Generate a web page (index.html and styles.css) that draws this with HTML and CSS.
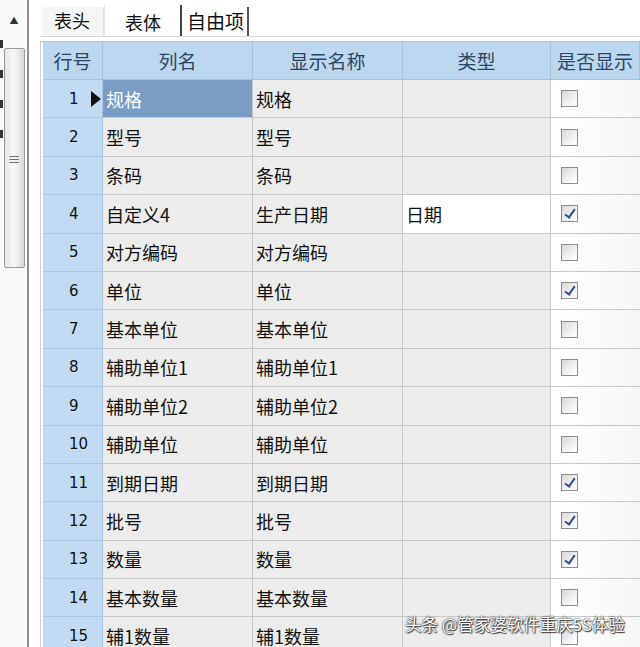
FILE: index.html
```html
<!DOCTYPE html>
<html lang="zh">
<head>
    <meta charset="UTF-8">
    <title>表体设置</title>
    <link rel="stylesheet" href="styles.css">
</head>
<body>
    <div class="side">
        <div class="side-marks"><span></span><span></span><span></span><span></span></div>
        <div class="scrollbar">
            <div class="arrow">&#9650;</div>
            <div class="thumb"><span class="grip">&#8801;</span></div>
        </div>
    </div>
    <div class="main">
        <div class="tabs">
            <div class="tab">表头</div>
            <div class="tab active">表体</div>
            <div class="tab last">自由项</div>
        </div>
        <div class="grid" id="grid">
            <div class="hd">行号</div>
            <div class="hd">列名</div>
            <div class="hd">显示名称</div>
            <div class="hd">类型</div>
            <div class="hd">是否显示</div>
        </div>
    </div>
    <div class="watermark">头条 @管家婆软件重庆5S体验</div>

    <script>
        const rows = [
            ["规格", "规格", "", false],
            ["型号", "型号", "", false],
            ["条码", "条码", "", false],
            ["自定义4", "生产日期", "日期", true],
            ["对方编码", "对方编码", "", false],
            ["单位", "单位", "", true],
            ["基本单位", "基本单位", "", false],
            ["辅助单位1", "辅助单位1", "", false],
            ["辅助单位2", "辅助单位2", "", false],
            ["辅助单位", "辅助单位", "", false],
            ["到期日期", "到期日期", "", true],
            ["批号", "批号", "", true],
            ["数量", "数量", "", true],
            ["基本数量", "基本数量", "", false],
            ["辅1数量", "辅1数量", "", false]
        ];
        const grid = document.getElementById("grid");
        rows.forEach(function (r, i) {
            let html = '<div class="num">' + (i + 1) + (i === 0 ? '<span class="cur"></span>' : '') + '</div>';
            html += '<div class="cell' + (i === 0 ? ' sel' : '') + '">' + r[0] + '</div>';
            html += '<div class="cell">' + r[1] + '</div>';
            html += '<div class="cell' + (r[2] ? ' white' : '') + '">' + r[2] + '</div>';
            html += '<div class="chk-cell"><span class="box' + (r[3] ? ' on' : '') + '"></span></div>';
            grid.insertAdjacentHTML("beforeend", html);
        });
    </script>
</body>
</html>
```

FILE: styles.css
```css
html, body {
    margin: 0;
    height: 100%;
    overflow: hidden;
}
body {
    display: flex;
    background: #fff;
    font-family: "Noto Sans CJK SC", "Liberation Sans", sans-serif;
    color: #111;
}
.side {
    width: 27px;
    flex: none;
    display: flex;
    border-right: 2px solid #8d8d8d;
    background: #fafafa;
}
.side-marks {
    width: 3px;
    padding-top: 40px;
    display: flex;
    flex-direction: column;
    gap: 22px;
}
.side-marks span {
    display: block;
    height: 8px;
    background: #333;
}
.scrollbar {
    width: 22px;
    display: flex;
    flex-direction: column;
    align-items: center;
    padding-top: 14px;
}
.arrow {
    font-size: 9px;
    color: #333;
    height: 34px;
}
.thumb {
    width: 19px;
    height: 218px;
    border: 1px solid #9a9a9a;
    border-radius: 2px;
    background: linear-gradient(to right, #e6e6e6, #f8f8f8 45%, #d8d8d8);
    display: flex;
    align-items: center;
    justify-content: center;
}
.grip {
    font-size: 13px;
    color: #555;
    line-height: 1;
}
.main {
    flex: 1;
    padding: 5px 0 0 11px;
    min-width: 0;
}
.tabs {
    display: flex;
    height: 31px;
    align-items: flex-end;
    padding-left: 2px;
    border-bottom: 1px solid #d8d8d8;
}
.tab {
    font-size: 18px;
    height: 29px;
    line-height: 27px;
    padding: 0 13px 0 12px;
    box-sizing: border-box;
    color: #111;
    background: #f6f6f6;
    border-right: 1px solid #e2e2e2;
}
.tab.active {
    background: #fff;
    height: 31px;
    line-height: 35px;
    padding: 0 19px 0 20px;
    border-left: 1px solid #e4e4e4;
    border-right: 2px solid #444;
}
.tab.last {
    padding: 0 3px 0 5px;
    font-size: 19px;
    border-right: 2px solid #555;
    background: #fff;
}
.grid {
    margin-top: 4px;
    border-left: 1px solid #c9d2dc;
    border-top: 1px solid #b9c3cf;
    padding-left: 2px;
    display: grid;
    grid-template-columns: 60px 150px 150px 148px 1fr;
    grid-template-rows: 38px;
    grid-auto-rows: 38.4px;
}
.grid > div {
    box-sizing: border-box;
    border-right: 1px solid #c8c8c8;
    border-bottom: 1px solid #c8c8c8;
    display: flex;
    align-items: center;
    font-size: 18px;
}
.hd {
    background: #bdd7ee;
    color: #2a4766;
    justify-content: center;
    font-size: 19px !important;
    border-color: #a9c2da !important;
}
.num {
    background: #c2dbf2;
    padding-left: 26px;
    font-family: "DejaVu Sans", sans-serif;
    font-size: 15px !important;
    position: relative;
    border-color: #a9c6e4 !important;
}
.cur {
    position: absolute;
    left: 48px;
    top: 11px;
    border-left: 10px solid #111;
    border-top: 8px solid transparent;
    border-bottom: 8px solid transparent;
}
.cell {
    background: #ececec;
    padding-left: 3px;
}
.cell.white {
    background: #fff;
}
.cell.sel {
    background: #7b9cc4;
    color: #fff;
}
.chk-cell {
    background: linear-gradient(to right, #fff, #f7f7f7);
    padding-left: 10px;
    border-right: none !important;
}
.box {
    width: 15px;
    height: 15px;
    border: 1px solid #8e8e8e;
    background: linear-gradient(135deg, #d8d8d8, #f6f6f6 70%, #fff);
    position: relative;
}
.box.on::after {
    content: "";
    position: absolute;
    left: 5px;
    top: 1px;
    width: 4px;
    height: 9px;
    border-right: 2px solid #2f4f8f;
    border-bottom: 2px solid #2f4f8f;
    transform: rotate(35deg);
}
.watermark {
    position: absolute;
    left: 405px;
    top: 612px;
    font-size: 16.5px;
    color: #fff;
    text-shadow: 0 0 1px #333, 0 0 2px #333, 1px 1px 1px #444;
}
```
